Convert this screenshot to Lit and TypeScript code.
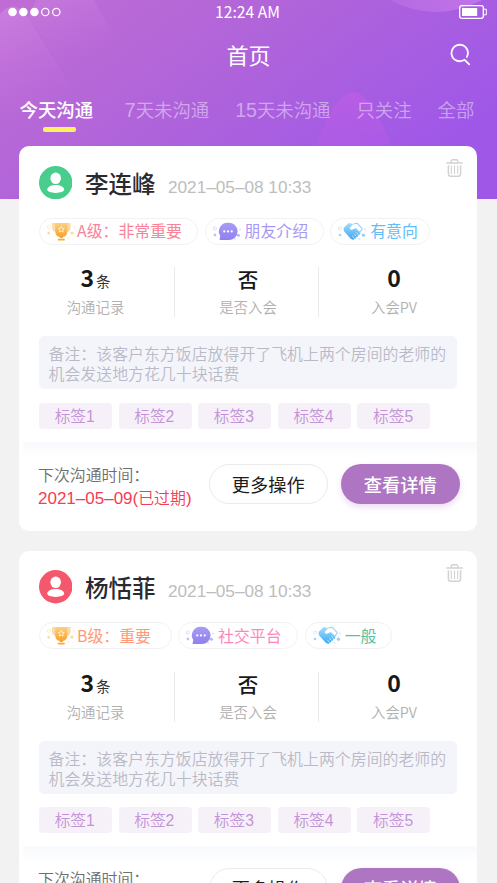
import { LitElement, html, css, svg } from "lit";
import { customElement, property } from "lit/decorators.js";

type BadgeKind = "trophy" | "chat" | "shake";

interface Badge {
  kind: BadgeKind;
  text: string;
  tone: string;
  width: number;
}

interface Customer {
  name: string;
  tone: string;
  date: string;
  badges: Badge[];
}

const TABS: [string, string][] = [
  ["", "今天沟通"],
  ["7", "天未沟通"],
  ["15", "天未沟通"],
  ["", "只关注"],
  ["", "全部"],
];
const LABELS = ["标签1", "标签2", "标签3", "标签4", "标签5"];

const CUSTOMERS: Customer[] = [
  {
    name: "李连峰",
    tone: "green",
    date: "2021–05–08 10:33",
    badges: [
      { kind: "trophy", text: "A级：非常重要", tone: "rose", width: 159 },
      { kind: "chat", text: "朋友介绍", tone: "violet", width: 119 },
      { kind: "shake", text: "有意向", tone: "sky", width: 100 },
    ],
  },
  {
    name: "杨恬菲",
    tone: "red",
    date: "2021–05–08 10:33",
    badges: [
      { kind: "trophy", text: "B级：重要", tone: "orange", width: 132.5 },
      { kind: "chat", text: "社交平台", tone: "pink", width: 120 },
      { kind: "shake", text: "一般", tone: "mint", width: 87 },
    ],
  },
];

const GLYPHS = {
  trophy: svg`
    <defs>
      <linearGradient id="g" x1="0" y1="0" x2="0" y2="1">
        <stop offset="0" stop-color="#fbd183"/><stop offset="1" stop-color="#fb9f24"/>
      </linearGradient>
    </defs>
    <rect x="0.6" y="3.4" width="2.8" height="2.8" rx="0.8" fill="none" stroke="#fdeac8" stroke-width="0.9"/>
    <circle cx="1.7" cy="11.2" r="1.3" fill="#fcd9a2"/>
    <circle cx="27" cy="5.2" r="0.9" fill="#fdebd0"/>
    <circle cx="25" cy="11" r="1.6" fill="#fcd9a2"/>
    <circle cx="21.6" cy="16.3" r="1" fill="#fdebd0"/>
    <path d="M5 1h18.6v4.4c0 2.8-1.8 4.6-4.4 4.6H9.4C6.8 10 5 8.2 5 5.400z" fill="#fbdba6"/>
    <path d="M8.200 1h12.200v8c0 3.600-2 5.600-4.600 6.100v.9h-3V15.100c-2.700-.5-4.600-2.500-4.600-6.100z" fill="url(#g)"/>
    <rect x="10.800" y="16.800" width="7" height="1.700" rx=".6" fill="#fba93b"/>
    <path d="M14.300 4.500l.9 1.800 2 .3-1.400 1.400.3 2-1.800-.9-1.800.9.3-2-1.400-1.400 2-.3z" fill="none" stroke="#fff3dc" stroke-width=".9"/>`,
  chat: svg`
    <defs>
      <linearGradient id="g" x1="0" y1="0" x2="0" y2="1">
        <stop offset="0" stop-color="#a99bf6"/><stop offset="1" stop-color="#8f80ee"/>
      </linearGradient>
    </defs>
    <rect x=".5" y="5" width="2.800" height="2.800" rx=".7" fill="none" stroke="#ddd8fb" stroke-width=".9"/>
    <circle cx="1.900" cy="13" r="1.400" fill="#c5bdf8"/>
    <circle cx="27" cy="7.600" r="1" fill="#e2defc"/>
    <circle cx="25.400" cy="13.200" r="1.500" fill="#b9b0f7"/>
    <circle cx="22" cy="16.800" r="1" fill="#ddd8fb"/>
    <path d="M15 .7a8.700 8.700 0 1 1 0 17.300H7.300c-.6 0-.9-.4-.7-.9l.7-3A8.700 8.700 0 0 1 15 .7z" fill="url(#g)"/>
    <circle cx="11.300" cy="9.400" r="1.100" fill="#fff"/>
    <circle cx="15" cy="9.400" r="1.100" fill="#fff"/>
    <circle cx="18.700" cy="9.400" r="1.100" fill="#fff"/>`,
  shake: svg`
    <defs>
      <linearGradient id="g" x1="0" y1="0" x2="0" y2="1">
        <stop offset="0" stop-color="#a5dcfb"/><stop offset="1" stop-color="#3aa9f5"/>
      </linearGradient>
    </defs>
    <rect x=".5" y="5" width="2.800" height="2.800" rx=".7" fill="none" stroke="#d3e6fb" stroke-width=".9"/>
    <circle cx="2" cy="13" r="1.300" fill="#a9d2fa"/>
    <circle cx="27" cy="7.600" r="1" fill="#dbeafc"/>
    <circle cx="25.400" cy="13.200" r="1.600" fill="#9dc9fa"/>
    <circle cx="21.500" cy="16.800" r="1" fill="#cfe3fb"/>
    <path d="M5.600 6L10.700 1l4.600.9-3.600 4c.4 1.900 2.200 2.200 3.900 1.200l1.900-.9 5.100 5.200-1.500 1.700-1 .2-.4 1.400-1.300.3-.3 1.300-1.400.2-1.200 1.500-2.800-1.300L5.800 8.900z" fill="url(#g)"/>
    <path d="M15.300 2L19 1.200l5.300 5.500-2.500 3.700-4.200-4.100" fill="none" stroke="#93d3fb" stroke-width="1.100" stroke-linejoin="round"/>
    <path d="M18.400 10.600l2 1.900M16.400 12.400l2 1.900M14.400 14.200l2 1.900" stroke="#fff" stroke-width=".8" fill="none"/>`,
};

@customElement("client-badge")
class ClientBadge extends LitElement {
  @property({ attribute: false }) badge!: Badge;

  static styles = css`
    :host {
      display: block;
      box-sizing: border-box;
      height: 27px;
    }
    .pill {
      box-sizing: border-box;
      height: 27px;
      display: flex;
      align-items: center;
      border: 1px solid #f2f2f4;
      border-radius: 14px;
      padding-left: 7px;
      font-size: 15.9px;
      line-height: 24px;
      white-space: nowrap;
    }
    .icon {
      width: 28px;
      height: 19px;
      flex: none;
      margin-right: 2px;
      overflow: visible;
    }
    .chat .icon, .shake .icon { margin-right: 4px; }
    .rose { color: #f98397; }
    .violet { color: #a898f5; }
    .sky { color: #62bdf6; }
    .orange { color: #ff9a78; }
    .pink { color: #ff86bd; }
    .mint { color: #58c1a3; }
  `;

  render() {
    const b = this.badge;
    return html`<div class="pill ${b.kind} ${b.tone}" style="width:${b.width}px">
      <svg class="icon" viewBox="0 0 28 19">${GLYPHS[b.kind]}</svg>${b.text}
    </div>`;
  }
}

@customElement("client-card")
class ClientCard extends LitElement {
  @property({ attribute: false }) customer!: Customer;

  static styles = css`
    :host {
      display: block;
      box-sizing: border-box;
      height: 384.6px;
      background: #fff;
      border-radius: 10px;
      overflow: hidden;
    }
    .head {
      display: flex;
      align-items: center;
      height: 33px;
      padding: 20px 14px 0 20px;
    }
    .avatar { width: 33.4px; height: 33.4px; flex: none; }
    .green { fill: #48cd8d; }
    .red { fill: #f4586d; }
    .name {
      margin-left: 12.5px;
      font-size: 23.5px;
      font-weight: 500;
      line-height: 32px;
      color: #2a2b30;
    }
    .date {
      font: 17.2px/20px "Liberation Sans", sans-serif;
      color: #bdbdbd;
      margin: 8px 0 0 12.6px;
    }
    .trash {
      width: 17px;
      height: 18px;
      margin: -29px 0 0 auto;
    }
    .badges {
      display: flex;
      gap: 6.6px;
      padding: 18.7px 0 0 20px;
    }
    .stats {
      display: grid;
      grid-template-columns: 156px 144px 151px;
      margin-top: 22.3px;
    }
    .stat {
      box-sizing: border-box;
      height: 50px;
      border-right: 1px solid #ebebee;
      display: flex;
      flex-direction: column;
      align-items: center;
    }
    .stat:first-child { padding-right: 2px; }
    .stat:nth-child(2) { padding-left: 3px; }
    .stat:last-child { border-color: transparent; }
    .value {
      flex: none;
      height: 28px;
      display: flex;
      align-items: baseline;
      line-height: 25px;
      color: #17181a;
      font-size: 20.5px;
      font-weight: 500;
    }
    .num {
      font-size: 23px;
      font-weight: 700;
      line-height: 21px;
    }
    .unit {
      font-size: 14.5px;
      font-weight: 400;
      line-height: 21px;
      margin-left: 2px;
      color: #333;
    }
    .caption {
      flex: none;
      font-size: 14.4px;
      font-weight: 350;
      line-height: 22px;
      color: #b0b0b0;
      margin-top: 1px;
    }
    .note {
      box-sizing: border-box;
      margin: 19.5px 20px 0;
      height: 53px;
      padding: 7.8px 9.5px 0;
      border-radius: 5px;
      background: #f4f5fa;
      color: #babac7;
      font-size: 15.92px;
      font-weight: 350;
      line-height: 20px;
      white-space: nowrap;
    }
    .labels {
      display: flex;
      gap: 6.6px;
      margin: 13.3px 0 0 20px;
    }
    .label {
      box-sizing: border-box;
      width: 73px;
      height: 26px;
      padding-right: 1.6px;
      border-radius: 4px;
      background: #f6f1f9;
      color: #c493d7;
      font-size: 15.7px;
      font-weight: 350;
      line-height: 25px;
      text-align: center;
    }
    .digit { font-family: "Liberation Sans", sans-serif; }
    .band {
      height: 16px;
      margin: 13px 0 0 3.5px;
      background: linear-gradient(#f8f9fc, #fff);
    }
    .foot {
      display: flex;
      padding: 6px 17px 0 19px;
    }
    .due {
      flex: 1;
      white-space: nowrap;
      font-size: 15.9px;
      line-height: 24px;
      margin-top: -1px;
      color: #6e6e6e;
      font-weight: 350;
    }
    .late { color: #f63c54; margin-top: -0.6px; }
    .late .digit { font-size: 17px; }
    .button {
      box-sizing: border-box;
      width: 119.5px;
      height: 40.5px;
      border-radius: 21px;
      border: 1px solid #ebebeb;
      font-size: 18.2px;
      line-height: 38px;
      text-align: center;
      color: #1c1c1c;
    }
    .primary {
      margin-left: 12.5px;
      border: 0;
      line-height: 40px;
      background: #ae76c2;
      color: #fff;
      font-weight: 500;
      box-shadow: 0 3px 6px rgba(190, 118, 210, 0.28);
    }
  `;

  render() {
    const c = this.customer;
    return html`
      <div class="head">
        <svg class="avatar" viewBox="0 0 33 33">
          <circle class=${c.tone} cx="16.500" cy="16.500" r="16.500"/>
          <ellipse cx="16.500" cy="12.200" rx="5.200" ry="5.700" fill="#fff"/>
          <path d="M8.200 23.100c0-2.600 3.700-4.400 8.300-4.400s8.300 1.800 8.300 4.400-3.600 3.500-8.300 3.500-8.300-.9-8.300-3.500z" fill="#fff"/>
        </svg>
        <div class="name">${c.name}</div>
        <div class="date">${c.date}</div>
        <svg class="trash" viewBox="0 0 17 18" fill="none" stroke="#d2d2d2">
          <path d="M.3 4h16.400M5.200 3.700V2.300Q5.200.8 6.700.8h3.600q1.500 0 1.500 1.500v1.400" stroke-width="1.400"/>
          <path d="M2.400 6.300v8.800q0 2.200 2.200 2.200h7.800q2.200 0 2.200-2.200V6.300" stroke-width="1.500"/>
          <path d="M5.300 6.500v8.500M8.500 6.500v8.500M11.700 6.500v8.500" stroke-width="1.100"/>
        </svg>
      </div>
      <div class="badges">${c.badges.map((b) => html`<client-badge .badge=${b}></client-badge>`)}</div>
      <div class="stats">
        <div class="stat">
          <div class="value"><span class="num">3</span><span class="unit">条</span></div>
          <div class="caption">沟通记录</div>
        </div>
        <div class="stat">
          <div class="value">否</div>
          <div class="caption">是否入会</div>
        </div>
        <div class="stat">
          <div class="value"><span class="num">0</span></div>
          <div class="caption">入会PV</div>
        </div>
      </div>
      <div class="note">备注：该客户东方饭店放得开了飞机上两个房间的老师的<br>机会发送地方花几十块话费</div>
      <div class="labels">
        ${LABELS.map((t) => html`<div class="label">${t.slice(0, 2)}<span class="digit">${t.slice(2)}</span></div>`)}
      </div>
      <div class="band"></div>
      <div class="foot">
        <div class="due">
          <div>下次沟通时间：</div>
          <div class="late"><span class="digit">2021–05–09(</span>已过期<span class="digit">)</span></div>
        </div>
        <div class="button">更多操作</div>
        <div class="button primary">查看详情</div>
      </div>
    `;
  }
}

@customElement("app-root")
class AppRoot extends LitElement {
  static styles = css`
    :host {
      display: block;
      position: relative;
      height: 883px;
      overflow: hidden;
      background: #f2f2f2;
      font-family: "Noto Sans CJK SC", sans-serif;
    }
    .backdrop {
      position: absolute;
      top: 0;
      left: 0;
      width: 100%;
      height: 199px;
    }
    .page { position: relative; }
    .status {
      display: grid;
      grid-template-columns: 1fr auto 1fr;
      align-items: center;
      height: 24px;
      padding: 0 10px 0 8px;
      color: #fff;
      font-size: 15.7px;
      line-height: 24px;
    }
    .signal { width: 54px; height: 10px; }
    .battery { width: 28px; height: 14px; justify-self: end; }
    .title-row {
      display: grid;
      grid-template-columns: 1fr auto 1fr;
      align-items: center;
      height: 59px;
      padding: 0 26px;
    }
    .title {
      grid-column: 2;
      color: #fff;
      font-size: 22px;
      line-height: 32px;
    }
    .search { width: 21px; height: 23px; justify-self: end; margin-top: 2px; }
    .tabs {
      display: flex;
      gap: 25.9px;
      height: 63px;
      padding-left: 19.5px;
      box-sizing: border-box;
      white-space: nowrap;
    }
    .tab {
      padding-top: 13px;
      font-size: 18.4px;
      font-weight: 350;
      line-height: 27px;
      color: rgba(255, 255, 255, 0.46);
    }
    .count {
      font-family: "Liberation Sans", sans-serif;
      font-size: 19.6px;
      line-height: 20px;
    }
    .active {
      margin-right: 5.8px;
      font-weight: 500;
      color: #fff;
    }
    .active::after {
      content: "";
      display: block;
      width: 33px;
      height: 4.4px;
      border-radius: 2px;
      margin: 4.3px 0 0 23.5px;
      background: #fdf15f;
    }
    .list {
      display: flex;
      flex-direction: column;
      gap: 20px;
      padding: 0 20px 0 19px;
    }
  `;

  render() {
    return html`
      <svg class="backdrop" viewBox="0 0 497 199" preserveAspectRatio="none">
        <defs>
          <linearGradient id="bg" gradientUnits="userSpaceOnUse" x1="80" y1="-40" x2="300" y2="260">
            <stop offset="0" stop-color="#bf6dd5"/>
            <stop offset=".45" stop-color="#b064da"/>
            <stop offset="1" stop-color="#9f57e8"/>
          </linearGradient>
          <linearGradient id="beam" gradientUnits="userSpaceOnUse" x1="0" y1="0" x2="40" y2="110">
            <stop offset="0" stop-color="#dc98ee" stop-opacity=".42"/>
            <stop offset="1" stop-color="#d078e2" stop-opacity="0"/>
          </linearGradient>
          <linearGradient id="ray" gradientUnits="userSpaceOnUse" x1="60" y1="0" x2="80" y2="62">
            <stop offset="0" stop-color="#dc98ee" stop-opacity=".22"/>
            <stop offset="1" stop-color="#d078e2" stop-opacity="0"/>
          </linearGradient>
          <linearGradient id="dome" x1="0" y1="0" x2="1" y2="0">
            <stop offset="0" stop-color="#cf80e6" stop-opacity=".3"/>
            <stop offset="1" stop-color="#cf86ee" stop-opacity=".6"/>
          </linearGradient>
          <linearGradient id="hill" x1="0" y1="0" x2="0" y2="1">
            <stop offset="0" stop-color="#c75de8" stop-opacity=".5"/>
            <stop offset="1" stop-color="#b85ae8" stop-opacity=".25"/>
          </linearGradient>
        </defs>
        <rect width="497" height="199" fill="url(#bg)"/>
        <path d="M36 0H94Q112 32 126 64H58Q44 38 28 18Z" fill="url(#ray)"/>
        <path d="M0 14Q14-2 27 16Q57 62 76 98L76 125H0Z" fill="url(#beam)"/>
        <path d="M390 0Q436 24 482 0Z" fill="url(#dome)"/>
        <path d="M306 165L315 146C327 118 339 92 353 92S380 118 392 146L400 165Z" fill="url(#hill)"/>
      </svg>
      <div class="page">
        <div class="status">
          <svg class="signal" viewBox="0 0 54 10" fill="#fff">
            <circle cx="4.500" cy="5" r="4.300"/><circle cx="15.400" cy="5" r="4.300"/><circle cx="26.400" cy="5" r="4.300"/>
            <g fill="none" stroke="#fff" stroke-width="1.200"><circle cx="37.300" cy="5" r="3.700"/><circle cx="48.300" cy="5" r="3.700"/></g>
          </svg>
          <span>12:24 AM</span>
          <svg class="battery" viewBox="0 0 28 14">
            <rect x=".7" y=".7" width="23.600" height="12.600" rx="2" fill="none" stroke="#fff" stroke-width="1.300"/>
            <rect x="3" y="3" width="15.200" height="8" fill="#fff"/>
            <path d="M25 4.200h2.300v5.600H25" fill="none" stroke="#fff"/>
          </svg>
        </div>
        <div class="title-row">
          <div class="title">首页</div>
          <svg class="search" viewBox="0 0 21 23" fill="none" stroke="#fff" stroke-width="1.800" stroke-linecap="round">
            <path d="M16.900 13.900A8.200 8.200 0 1 0 13.600 17.200L14.600 16.800L19.200 21.300"/>
          </svg>
        </div>
        <div class="tabs">
          ${TABS.map(([n, t], i) => html`<div class="tab ${i === 0 ? "active" : ""}">${n ? html`<span class="count">${n}</span>` : ""}${t}</div>`)}
        </div>
        <div class="list">${CUSTOMERS.map((c) => html`<client-card .customer=${c}></client-card>`)}</div>
      </div>
    `;
  }
}
